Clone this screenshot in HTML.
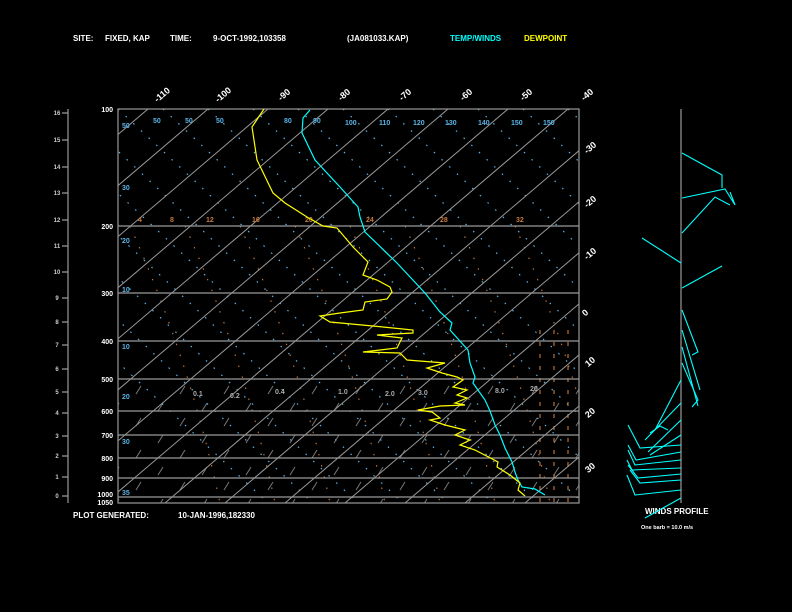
<!DOCTYPE html>
<html><head><meta charset="utf-8"><style>
html,body{margin:0;padding:0;background:#000;}
svg{display:block;}
text{font-family:"Liberation Sans",sans-serif;font-weight:bold;}
</style></head><body>
<svg width="792" height="612" viewBox="0 0 792 612" xmlns="http://www.w3.org/2000/svg">
<rect width="792" height="612" fill="#000"/>
<defs>
<clipPath id="c"><rect x="118" y="109" width="461" height="394"/></clipPath>
<pattern id="sl" x="0" y="0" width="44" height="32" patternUnits="userSpaceOnUse">
<line x1="4" y1="10" x2="9" y2="2" stroke="#777" stroke-width="1"/>
<line x1="26" y1="27" x2="31" y2="19" stroke="#777" stroke-width="1"/>
</pattern>
</defs>
<g font-size="8" fill="#fff">
<text x="73" y="41">SITE:</text><text x="105" y="41">FIXED, KAP</text>
<text x="170" y="41">TIME:</text><text x="213" y="41">9-OCT-1992,103358</text>
<text x="347" y="41">(JA081033.KAP)</text>
<text x="450" y="41" fill="#00ffff">TEMP/WINDS</text>
<text x="524" y="41" fill="#ffff00">DEWPOINT</text>
<text x="73" y="518">PLOT GENERATED:</text><text x="178" y="518">10-JAN-1996,182330</text>
<text x="645" y="514">WINDS PROFILE</text>
<text x="641" y="529" font-size="5.5">One barb = 10.0 m/s</text>
</g>
<g clip-path="url(#c)">
<rect x="118" y="385" width="461" height="118" fill="url(#sl)"/>
<path stroke="#5ab4e6" stroke-width="1.2" stroke-dasharray="1.5 9" fill="none" d="M-152,109l420,394M-107,109l420,394M-62,109l420,394M-17,109l420,394M28,109l420,394M73,109l420,394M118,109l420,394M163,109l420,394M208,109l420,394M253,109l420,394M298,109l420,394M343,109l420,394M388,109l420,394M433,109l420,394M478,109l420,394M523,109l420,394M568,109l420,394"/>
<path stroke="#c87a3c" stroke-width="1.1" stroke-dasharray="1.5 10" fill="none" d="M130,226Q190,360 220,503M185,226Q245,360 275,503M240,226Q300,360 330,503M295,226Q355,360 385,503M350,226Q410,360 440,503M405,226Q465,360 495,503M460,226Q520,360 550,503M515,226Q575,360 605,503"/>
<path stroke="#c87a3c" stroke-width="1.1" stroke-dasharray="4 8" fill="none" d="M540,330V503M554,330V503M568,330V503"/>
<path stroke="#999" stroke-width="1" fill="none" d="M88,109l-463,394M148,109l-463,394M208,109l-463,394M268,109l-463,394M328,109l-463,394M388,109l-463,394M448,109l-463,394M508,109l-463,394M568,109l-463,394M628,109l-463,394M688,109l-463,394M748,109l-463,394M808,109l-463,394M868,109l-463,394M928,109l-463,394M988,109l-463,394M1048,109l-463,394"/>
</g>
<g stroke="#999" stroke-width="1.2" fill="none">
<rect x="118" y="109" width="461" height="394"/>
<path d="M118,226H579M118,293H579M118,341H579M118,379H579M118,411H579M118,435H579M118,458H579M118,478H579M118,497H579"/>
<line x1="68" y1="109" x2="68" y2="503"/>
<line x1="681" y1="109" x2="681" y2="503"/>
<path d="M62,496H68M62,477H68M62,456H68M62,436H68M62,413H68M62,392H68M62,369H68M62,345H68M62,322H68M62,298H68M62,272H68M62,246H68M62,220H68M62,193H68M62,167H68M62,140H68M62,113H68"/>
</g>
<g font-size="6" fill="#ccc" text-anchor="middle">
<text x="57" y="498">0</text><text x="57" y="479">1</text><text x="57" y="458">2</text><text x="57" y="438">3</text>
<text x="57" y="415">4</text><text x="57" y="394">5</text><text x="57" y="371">6</text><text x="57" y="347">7</text>
<text x="57" y="324">8</text><text x="57" y="300">9</text><text x="57" y="274">10</text><text x="57" y="248">11</text>
<text x="57" y="222">12</text><text x="57" y="195">13</text><text x="57" y="169">14</text><text x="57" y="142">15</text><text x="57" y="115">16</text>
</g>
<g font-size="7" fill="#fff" text-anchor="end">
<text x="113" y="112">100</text><text x="113" y="229">200</text><text x="113" y="296">300</text>
<text x="113" y="344">400</text><text x="113" y="382">500</text><text x="113" y="414">600</text>
<text x="113" y="438">700</text><text x="113" y="461">800</text><text x="113" y="481">900</text>
<text x="113" y="497">1000</text><text x="113" y="505">1050</text>
</g>
<g font-size="9" fill="#fff" text-anchor="middle" font-weight="normal">
<text x="164" y="97" transform="rotate(-40 164 97)">-110</text>
<text x="225" y="97" transform="rotate(-40 225 97)">-100</text>
<text x="286" y="97" transform="rotate(-40 286 97)">-90</text>
<text x="346" y="97" transform="rotate(-40 346 97)">-80</text>
<text x="407" y="97" transform="rotate(-40 407 97)">-70</text>
<text x="468" y="97" transform="rotate(-40 468 97)">-60</text>
<text x="528" y="97" transform="rotate(-40 528 97)">-50</text>
<text x="589" y="97" transform="rotate(-40 589 97)">-40</text>
<text x="592" y="150" transform="rotate(-40 592 150)">-30</text>
<text x="592" y="204" transform="rotate(-40 592 204)">-20</text>
<text x="592" y="256" transform="rotate(-40 592 256)">-10</text>
<text x="587" y="315" transform="rotate(-40 587 315)">0</text>
<text x="592" y="364" transform="rotate(-40 592 364)">10</text>
<text x="592" y="415" transform="rotate(-40 592 415)">20</text>
<text x="592" y="470" transform="rotate(-40 592 470)">30</text>
</g>
<g font-size="7" fill="#5ab4e6">
<text x="122" y="128">50</text><text x="153" y="123">50</text><text x="185" y="123">50</text><text x="216" y="123">50</text>
<text x="284" y="123">80</text><text x="313" y="123">90</text><text x="345" y="125">100</text><text x="379" y="125">110</text>
<text x="413" y="125">120</text><text x="445" y="125">130</text><text x="478" y="125">140</text><text x="511" y="125">150</text><text x="543" y="125">150</text>
<text x="122" y="190">30</text><text x="122" y="243">20</text><text x="122" y="292">10</text><text x="122" y="349">10</text>
<text x="122" y="399">20</text><text x="122" y="444">30</text><text x="122" y="495">35</text>
</g>
<g font-size="7" fill="#c87a3c">
<text x="138" y="222">4</text><text x="170" y="222">8</text><text x="206" y="222">12</text><text x="252" y="222">16</text>
<text x="305" y="222">20</text><text x="366" y="222">24</text><text x="440" y="222">28</text><text x="516" y="222">32</text>
</g>
<g font-size="7" fill="#aaa">
<text x="193" y="396">0.1</text><text x="230" y="398">0.2</text><text x="275" y="394">0.4</text><text x="338" y="394">1.0</text>
<text x="385" y="396">2.0</text><text x="418" y="395">3.0</text><text x="495" y="393">8.0</text><text x="530" y="391">20</text>
</g>
<polyline fill="none" stroke="#00ffff" stroke-width="1.2" points="310,110 303,118 302,133 315,160 340,187 358,207 360,217 365,232 397,263 425,293 440,312 452,323 450,330 468,350 470,363 475,377 473,383 485,400 490,411 495,425 500,435 505,448 512,462 515,472 518,480 522,487 535,489 545,495"/>
<polyline fill="none" stroke="#ffff00" stroke-width="1.2" points="264,109 252,127 257,160 273,193 285,203 307,217 323,226 337,228 353,247 368,262 363,275 377,280 390,287 392,292 387,299 365,302 363,310 340,313 320,316 330,322 383,327 413,330 413,333 377,335 402,338 397,348 363,352 400,353 407,360 445,363 427,368 442,373 457,377 463,380 453,387 467,390 457,395 467,398 455,403 465,405 440,406 418,410 432,412 440,418 430,420 445,425 465,430 455,435 470,440 460,445 475,450 498,462 497,467 510,475 520,483 518,490 525,496"/>
<g fill="none" stroke="#00ffff" stroke-width="1.1">
<polyline points="682,153 722,175 722,188"/><polyline points="682,198 725,189 735,205 730,192"/><polyline points="682,233 715,197 730,205"/>
<polyline points="642,238 681,263"/><polyline points="682,288 722,266"/>
<polyline points="682,310 698,352 692,355"/><polyline points="682,330 700,390"/><polyline points="682,347 698,406"/><polyline points="682,363 698,400 692,407"/>
<polyline points="681,380 655,430"/><polyline points="681,403 645,440"/><polyline points="681,420 648,452"/><polyline points="681,435 650,455"/>
<polyline points="681,445 640,448 628,425"/><polyline points="681,452 636,460 628,445"/><polyline points="681,460 635,465 628,450"/>
<polyline points="681,468 632,470 627,460"/><polyline points="681,474 638,478 628,465"/><polyline points="681,480 640,483 630,470"/>
<polyline points="681,490 635,495 627,475"/><polyline points="681,498 645,518"/>
<polyline points="650,433 660,426 668,430"/>
</g>
</svg>
</body></html>
